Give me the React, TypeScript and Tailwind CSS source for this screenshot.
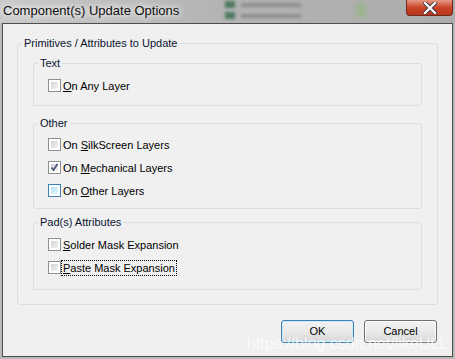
import type { ReactNode } from "react";

function CheckBox({
  checked,
  hot,
  focus,
  children,
}: {
  checked?: boolean;
  hot?: boolean;
  focus?: boolean;
  children: ReactNode;
}) {
  return (
    <div className="h-[23px] flex items-center pl-[14px]">
      <span
        className={
          hot
            ? "w-[13px] h-[13px] border border-[#3c7fb1] bg-white p-[2px] flex"
            : "w-[13px] h-[13px] border border-[#8e8f8f] bg-white p-[2px] flex"
        }
      >
        <span
          className={
            hot
              ? "flex-1 bg-gradient-to-br from-[#b1dff6] to-[#e9f7fe] flex items-center justify-center"
              : "flex-1 bg-gradient-to-br from-[#d2d2d2] to-[#f5f5f5] flex items-center justify-center"
          }
        >
          {checked && (
            <svg width="9" height="9" viewBox="0 0 9 9" className="-m-[1px]">
              <path
                d="M1.5 4.5 L3.5 7 L7.5 1"
                fill="none"
                stroke="#4b5a7c"
                strokeWidth="1.8"
              />
            </svg>
          )}
        </span>
      </span>
      <span
        className={
          focus
            ? "ml-[1px] px-[1px] leading-[14px] outline outline-1 outline-dotted outline-black"
            : "ml-[2px] leading-[14px]"
        }
      >
        {children}
      </span>
    </div>
  );
}

function Group({
  label,
  className,
  children,
}: {
  label: string;
  className: string;
  children: ReactNode;
}) {
  return (
    <fieldset className={"border border-[#d5dfe5] rounded-[3px] p-0 " + className}>
      <legend className="ml-[4px] px-[2px] leading-[14px] text-[#0b1530]">
        {label}
      </legend>
      {children}
    </fieldset>
  );
}

export default function App() {
  return (
    <div className="w-[455px] h-[359px] overflow-hidden relative bg-[#b9b9b9] font-['Liberation_Sans',Arial,sans-serif] text-[11px] text-black">
      <div className="h-[23px] flex items-start relative bg-gradient-to-r from-[#c9c9c9] via-[#b3b3b3] to-[#acacac]">
        <div className="pl-[3px] pt-[3px] text-[13px] leading-[16px] text-[#111] [text-shadow:0_0_6px_#fff,0_0_8px_#fff]">
          Component(s) Update Options
        </div>
        <div className="ml-[46px] flex flex-col gap-[4px] pt-[1px] blur-[1.5px]">
          <div className="flex items-center gap-[6px]">
            <span className="w-[10px] h-[7px] bg-[#4f7a62]" />
            <span className="w-[60px] h-[4px] bg-[#8e8e8e]" />
          </div>
          <div className="flex items-center gap-[6px]">
            <span className="w-[10px] h-[7px] bg-[#4f7a62]" />
            <span className="w-[60px] h-[4px] bg-[#8e8e8e]" />
          </div>
        </div>
        <div className="ml-[55px] mt-[3px] w-[10px] h-[14px] bg-[#9cb58f] blur-[2px]" />
        <div className="ml-auto mr-[2px] w-[47px] h-[16px] rounded-b-[4px] border border-[#6e2a1d] border-t-0 bg-gradient-to-b from-[#e69883] via-[#c9452a] to-[#b8361c] flex items-center justify-center">
          <svg width="14" height="12" viewBox="0 0 14 12">
            <path
              d="M2 1 L12 11 M12 1 L2 11"
              stroke="#3a3a4a"
              strokeWidth="4"
              strokeLinecap="square"
            />
            <path
              d="M2 1 L12 11 M12 1 L2 11"
              stroke="#ffffff"
              strokeWidth="2.2"
              strokeLinecap="square"
            />
          </svg>
        </div>
      </div>

      <div className="mx-[2px] h-[334px] border border-[#4d4d4d] bg-[#f0f0f0] px-[14px] pt-[12px] flex flex-col">
        <Group label="Primitives / Attributes to Update" className="">
          <div className="px-[15px] pt-[6px] pb-[14px]">
            <Group label="Text" className="h-[50px]">
              <div className="pt-[4px] pb-[8px]">
                <CheckBox>
                  <span className="underline">O</span>n Any Layer
                </CheckBox>
              </div>
            </Group>
            <Group label="Other" className="mt-[10px]">
              <div className="pt-[3px] pb-[6px]">
                <CheckBox>
                  On <span className="underline">S</span>ilkScreen Layers
                </CheckBox>
                <CheckBox checked>
                  On <span className="underline">M</span>echanical Layers
                </CheckBox>
                <CheckBox hot>
                  On <span className="underline">O</span>ther Layers
                </CheckBox>
              </div>
            </Group>
            <Group label="Pad(s) Attributes" className="mt-[6px]">
              <div className="pt-[4px] pb-[10px]">
                <CheckBox>
                  <span className="underline">S</span>older Mask Expansion
                </CheckBox>
                <CheckBox focus>
                  <span className="underline">P</span>aste Mask Expansion
                </CheckBox>
              </div>
            </Group>
          </div>
        </Group>

        <div className="mt-[15px] flex justify-end gap-[10px] pr-[1px]">
          <button className="w-[73px] h-[23px] rounded-[3px] border border-[#3c7fb1] bg-gradient-to-b from-[#f2f2f2] via-[#ebebeb] to-[#d6d6d6] shadow-[inset_0_0_0_1px_#c8ecfd] text-[11px] leading-none">
            OK
          </button>
          <button className="w-[73px] h-[23px] rounded-[3px] border border-[#707070] bg-gradient-to-b from-[#f2f2f2] via-[#ebebeb] to-[#d6d6d6] shadow-[inset_0_0_0_1px_#fcfcfc] text-[11px] leading-none">
            Cancel
          </button>
        </div>
      </div>

      <div className="absolute left-[247px] top-[334px] text-[16px] leading-[20px] text-white/70 pointer-events-none">
        https://blog.csdn.net/likeULL
      </div>
    </div>
  );
}
